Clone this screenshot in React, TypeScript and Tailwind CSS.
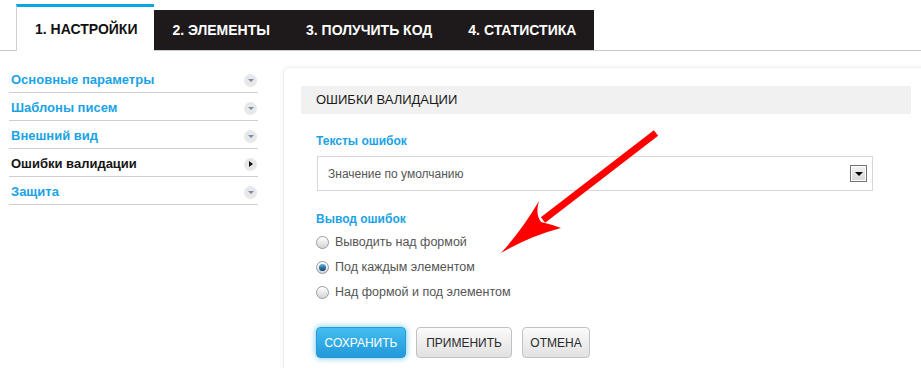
const font = "font-['Liberation_Sans',Arial,sans-serif]";

const tabs = ["2. ЭЛЕМЕНТЫ", "3. ПОЛУЧИТЬ КОД", "4. СТАТИСТИКА"];

const menu = [
  { label: "Основные параметры", active: false },
  { label: "Шаблоны писем", active: false },
  { label: "Внешний вид", active: false },
  { label: "Ошибки валидации", active: true },
  { label: "Защита", active: false },
];

const radios = [
  { label: "Выводить над формой", checked: false },
  { label: "Под каждым элементом", checked: true },
  { label: "Над формой и под элементом", checked: false },
];

function MenuIcon({ active }: { active: boolean }) {
  return (
    <span className="flex h-[13px] w-[13px] items-center justify-center rounded-full bg-[#e8e8e8]">
      {active ? (
        <span className="ml-px h-0 w-0 border-y-[3px] border-l-[4px] border-y-transparent border-l-[#111]" />
      ) : (
        <span className="mt-px h-0 w-0 border-x-[3px] border-t-[3px] border-x-transparent border-t-[#6d8fb0]" />
      )}
    </span>
  );
}

function Radio({ checked }: { checked: boolean }) {
  return (
    <span className="flex h-[13px] w-[13px] items-center justify-center rounded-full border border-[#9a9a9a] bg-gradient-to-b from-[#ffffff] to-[#d4d4d4] shadow-[inset_0_1px_1px_rgba(255,255,255,0.9)]">
      {checked ? (
        <span className="h-[7px] w-[7px] rounded-full bg-gradient-to-b from-[#5fb2e6] to-[#0b3f6e]" />
      ) : null}
    </span>
  );
}

export default function App() {
  return (
    <div className={`relative h-[368px] w-[921px] overflow-hidden bg-white ${font}`}>
      {/* tabs */}
      <div className="flex h-[51px] items-end border-b border-[#cccccc] pl-4">
        <div className="-mb-px flex h-[47px] items-center border-t-[3px] border-l border-t-[#0aa5e3] border-l-[#cfcfcf] bg-white pr-[17px] pl-[18px] text-[14px] font-bold text-[#111]">
          1. НАСТРОЙКИ
        </div>
        <div className="flex h-10 bg-[#1e1a1b]">
          {tabs.map((tab) => (
            <div key={tab} className="flex items-center px-[18px] text-[14px] font-bold text-white">
              {tab}
            </div>
          ))}
        </div>
      </div>

      <div className="flex pt-[14px] pl-[9px]">
        {/* sidebar */}
        <div className="w-[249px] shrink-0">
          {menu.map((item) => (
            <div
              key={item.label}
              className="flex h-[28px] items-center justify-between border-b border-[#cfcfcf] pt-[3px] pr-[1px] pl-[2px]"
            >
              <span className={`text-[13px] font-bold ${item.active ? "text-[#151515]" : "text-[#1aa3e6]"}`}>
                {item.label}
              </span>
              <MenuIcon active={item.active} />
            </div>
          ))}
        </div>

        {/* panel */}
        <div className="mt-[2px] ml-[25px] h-[320px] w-[646px] shrink-0 rounded-md border border-[#f0f0f0] bg-white px-[17px] pt-[18px] shadow-[0_0_5px_rgba(0,0,0,0.06)]">
          <div className="flex h-[28px] w-[610px] items-center bg-[#f1f1f1] pl-[15px] text-[13px] text-[#1a1a1a]">
            ОШИБКИ ВАЛИДАЦИИ
          </div>

          <div className="pl-[15px]">
            <div className="mt-5 text-[12px] leading-[14px] font-bold text-[#1aa3e6]">Тексты ошибок</div>
            <div className="mt-2 ml-px flex h-[35px] w-[556px] items-center justify-between border border-[#d8d8d8] pr-[5px] pl-[10px]">
              <span className="text-[12px] text-[#555]">Значение по умолчанию</span>
              <span className="flex h-[17px] w-[17px] items-center justify-center border border-[#727272] bg-gradient-to-b from-[#f4f4f4] to-[#d6d6d6] shadow-[inset_0_0_0_1px_#fff]">
                <span className="mt-px h-0 w-0 border-x-[4px] border-t-[4px] border-x-transparent border-t-black" />
              </span>
            </div>

            <div className="mt-[21px] text-[12px] leading-[14px] font-bold text-[#1aa3e6]">Вывод ошибок</div>
            <div className="mt-1">
              {radios.map((r) => (
                <div key={r.label} className="flex h-[25px] items-center gap-[6px]">
                  <Radio checked={r.checked} />
                  <span className="text-[12.5px] text-[#555]">{r.label}</span>
                </div>
              ))}
            </div>

            <div className="mt-[22px] flex gap-[10px]">
              <button className="flex h-[31px] w-[90px] items-center justify-center rounded-[4px] border border-[#2a9ad6] bg-gradient-to-b from-[#42bdf1] to-[#2299d9] text-[12px] text-white shadow-[0_0_6px_rgba(40,170,235,0.7)]">
                СОХРАНИТЬ
              </button>
              <button className="flex h-[31px] w-[96px] items-center justify-center rounded-[4px] border border-[#c2c2c2] bg-gradient-to-b from-[#fbfbfb] to-[#e1e1e1] text-[12px] text-[#2a2a2a]">
                ПРИМЕНИТЬ
              </button>
              <button className="flex h-[31px] w-[68px] items-center justify-center rounded-[4px] border border-[#c2c2c2] bg-gradient-to-b from-[#fbfbfb] to-[#e1e1e1] text-[12px] text-[#2a2a2a]">
                ОТМЕНА
              </button>
            </div>
          </div>
        </div>
      </div>

      {/* red annotation arrow */}
      <svg className="pointer-events-none absolute top-0 left-0" width="921" height="368" viewBox="0 0 921 368">
        <line x1="656" y1="133" x2="543" y2="220" stroke="#ff0000" strokeWidth="7" />
        <path
          d="M501 253 Q522 230 539 201 Q535 214 541 222 Q550 224 561 228 Q530 236 501 253 Z"
          fill="#ff0000"
        />
      </svg>
    </div>
  );
}
